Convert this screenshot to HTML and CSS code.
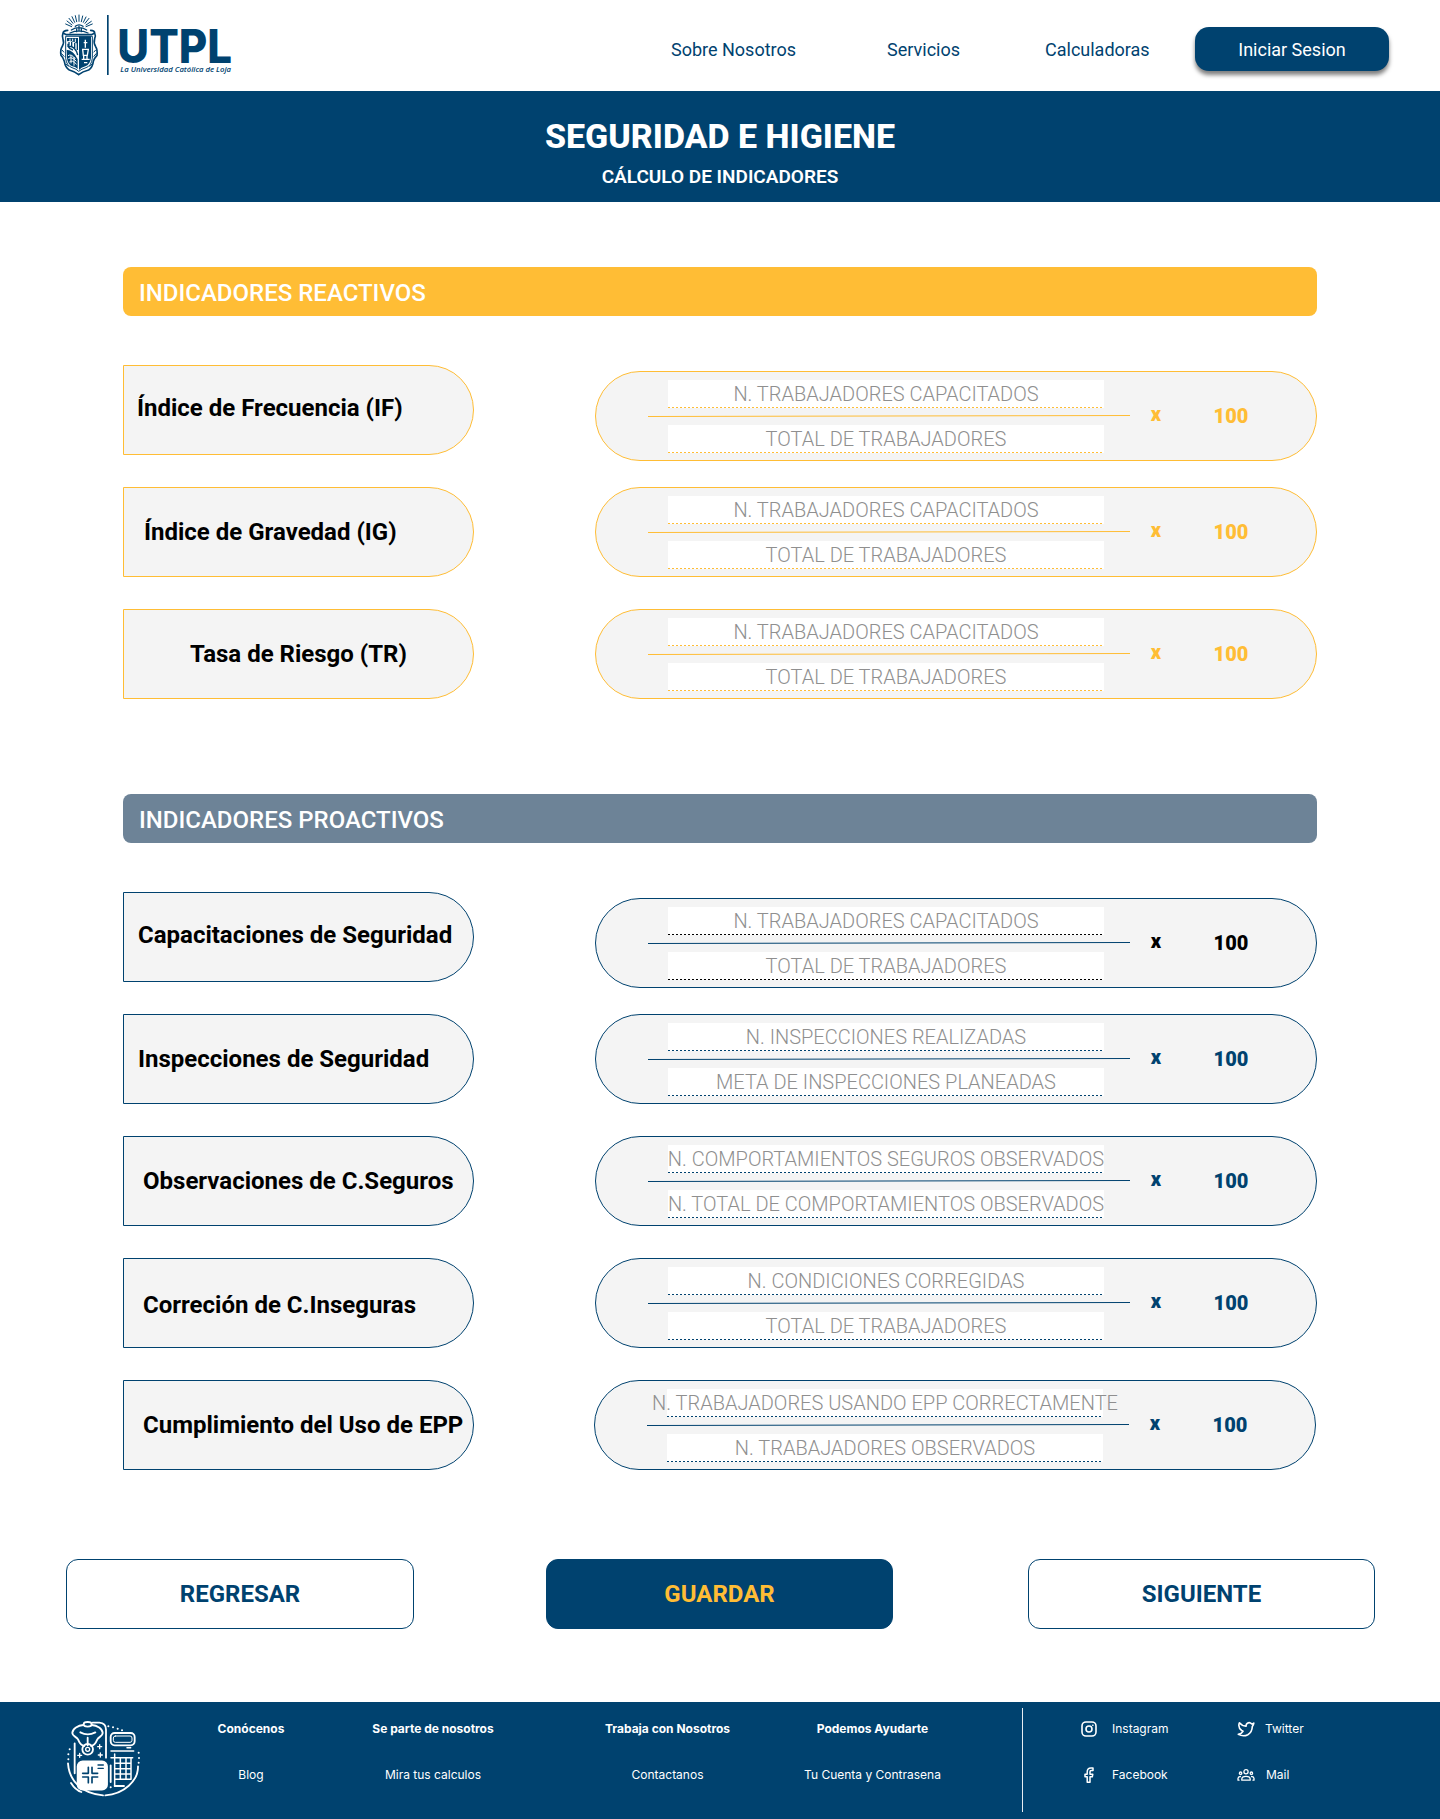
FILE: index.html
```html
<!DOCTYPE html>
<html lang="es">
<head>
<meta charset="utf-8">
<title>Seguridad e Higiene - UTPL</title>
<link rel="stylesheet" href="styles.css">
</head>
<body>
<header class="header">
  <svg class="logo" viewBox="24 30 525 201" role="img" aria-label="UTPL">
    <g fill="none" stroke="#00426f" stroke-linecap="round">
      <path stroke-width="3" d="M65 80 47 72M66 75 51 63M69 70 57 55M74 67 66 50M80 65 76 47M87 64V45M94 65 98 48M100 67 108 51M105 70 117 55M108 75 124 64M108 80 127 72"/>
      <path stroke-width="4" d="M64 90Q87 76 110 90M60 99Q87 86 114 99M76 79Q87 70 99 79M80 87V95M94 87V95M87 79V93"/>
      <path stroke-width="5" d="M53 91Q40 92 39 99L49 104H125L134 99Q134 92 122 91M39 99Q35 110 39 118 43 127 37 139 30 149 33 166 40 172 43 184 46 203 58 210 76 215 86 224 98 214 116 210 128 202 130 184 134 173 141 166 143 149 137 140 130 128 134 116 138 107 134 99"/>
      <path stroke-width="3" d="M47 110V175Q50 198 66 203 80 207 86 214 95 207 108 203 124 198 127 175V110Z"/>
    </g>
    <path fill="#00426f" d="M87 109H123V174Q120 194 106 199 93 203 87 210ZM51 114H84V132Q65 120 51 124ZM50 149Q71 151 83 178V207Q76 200 67 199 53 194 51 174Z"/>
    <g fill="none" stroke="#fff" stroke-width="4">
      <path d="M106 119V143M101 128H112M98 148H115L112 166H100ZM95 178H119M101 166V178M111 166V178M102 188H112"/>
      <path stroke-width="3" d="M54 167Q64 160 76 177M55 176Q65 168 79 184M58 186Q66 178 80 193M63 166V190M72 171V197M60 116V123M68 116V123M76 116V126"/>
    </g>
    <g fill="none" stroke="#00426f" stroke-width="4">
      <path d="M54 131V139Q76 137 83 165M57 126V136M65 126V141M74 129V148M82 127V150M54 139Q58 147 69 150"/>
      <path stroke-width="3" d="M36 150 42 157M34 160 43 170M137 150 131 157M139 160 131 170M48 192 56 199M126 192 118 199"/>
    </g>
    <path fill="#00426f" d="M171 45h5v180h-5z"/>
    <text class="logo-name" x="202" y="188" textLength="344" lengthAdjust="spacingAndGlyphs">UTPL</text>
    <text class="logo-tagline" x="211" y="217" textLength="332" lengthAdjust="spacingAndGlyphs">La Universidad Católica de Loja</text>
  </svg>
  <nav class="nav">
    <a class="nav-about">Sobre Nosotros</a>
    <a class="nav-services">Servicios</a>
    <a class="nav-calc">Calculadoras</a>
  </nav>
  <button class="login">Iniciar Sesion</button>
</header>

<section class="hero">
  <h1>SEGURIDAD E HIGIENE</h1>
  <h2>CÁLCULO DE INDICADORES</h2>
</section>

<main>
  <section class="group reactive">
    <h3>INDICADORES REACTIVOS</h3>
    <div class="rows">
      <div class="row first">
        <div class="label raised flush">Índice de Frecuencia (IF)</div>
        <div class="formula"><div class="fraction"><div class="field">N. TRABAJADORES CAPACITADOS</div><svg class="bar" viewBox="0 0 482 3"><path d="M0 1.5 482 .5"/></svg><div class="field">TOTAL DE TRABAJADORES</div></div><span class="times">x</span><span class="hundred">100</span></div>
      </div>
      <div class="row">
        <div class="label indent wide">Índice de Gravedad (IG)</div>
        <div class="formula"><div class="fraction"><div class="field">N. TRABAJADORES CAPACITADOS</div><svg class="bar" viewBox="0 0 482 3"><path d="M0 1.5 482 .5"/></svg><div class="field">TOTAL DE TRABAJADORES</div></div><span class="times">x</span><span class="hundred">100</span></div>
      </div>
      <div class="row">
        <div class="label centered">Tasa de Riesgo (TR)</div>
        <div class="formula"><div class="fraction"><div class="field">N. TRABAJADORES CAPACITADOS</div><svg class="bar" viewBox="0 0 482 3"><path d="M0 1.5 482 .5"/></svg><div class="field">TOTAL DE TRABAJADORES</div></div><span class="times">x</span><span class="hundred">100</span></div>
      </div>
    </div>
  </section>

  <section class="group proactive">
    <h3>INDICADORES PROACTIVOS</h3>
    <div class="rows">
      <div class="row first">
        <div class="label raised">Capacitaciones de Seguridad</div>
        <div class="formula plain"><div class="fraction"><div class="field">N. TRABAJADORES CAPACITADOS</div><svg class="bar" viewBox="0 0 482 3"><path d="M0 1.5 482 .5"/></svg><div class="field">TOTAL DE TRABAJADORES</div></div><span class="times">x</span><span class="hundred">100</span></div>
      </div>
      <div class="row">
        <div class="label">Inspecciones de Seguridad</div>
        <div class="formula"><div class="fraction"><div class="field">N. INSPECCIONES REALIZADAS</div><svg class="bar" viewBox="0 0 482 3"><path d="M0 1.5 482 .5"/></svg><div class="field">META DE INSPECCIONES PLANEADAS</div></div><span class="times">x</span><span class="hundred">100</span></div>
      </div>
      <div class="row">
        <div class="label indent">Observaciones de C.Seguros</div>
        <div class="formula"><div class="fraction"><div class="field">N. COMPORTAMIENTOS SEGUROS OBSERVADOS</div><svg class="bar" viewBox="0 0 482 3"><path d="M0 1.5 482 .5"/></svg><div class="field">N. TOTAL DE COMPORTAMIENTOS OBSERVADOS</div></div><span class="times">x</span><span class="hundred">100</span></div>
      </div>
      <div class="row">
        <div class="label indent lowered">Correción de C.Inseguras</div>
        <div class="formula"><div class="fraction"><div class="field">N. CONDICIONES CORREGIDAS</div><svg class="bar" viewBox="0 0 482 3"><path d="M0 1.5 482 .5"/></svg><div class="field">TOTAL DE TRABAJADORES</div></div><span class="times">x</span><span class="hundred">100</span></div>
      </div>
      <div class="row last">
        <div class="label indent">Cumplimiento del Uso de EPP</div>
        <div class="formula"><div class="fraction"><div class="field">N. TRABAJADORES USANDO EPP CORRECTAMENTE</div><svg class="bar" viewBox="0 0 482 3"><path d="M0 1.5 482 .5"/></svg><div class="field">N. TRABAJADORES OBSERVADOS</div></div><span class="times">x</span><span class="hundred">100</span></div>
      </div>
    </div>
  </section>

  <div class="actions">
    <button class="action back">REGRESAR</button>
    <button class="action primary">GUARDAR</button>
    <button class="action">SIGUIENTE</button>
  </div>
</main>

<footer class="footer">
  <svg class="footer-logo" viewBox="48 54 222 240" fill="none" stroke="#fff" stroke-width="5.5" stroke-linecap="round" stroke-linejoin="round">
    <ellipse cx="113" cy="73" rx="12" ry="7"/>
    <path d="M100 75C84 76 68 86 67 98 66 109 80 110 84 118 89 130 94 137 103 138M125 75C142 76 157 86 158 98 159 109 146 110 142 118 137 130 132 137 123 138M91 97Q113 109 136 97M113 113V136M128 68H148Q168 69 168 89V173M74 130V220"/>
    <circle cx="113" cy="148" r="16"/><circle cx="113" cy="148" r="6" stroke-width="4"/>
    <path stroke-width="4" d="M149 134V146M143 140H155M151 159V171M145 165H157M89 160V172M83 166H95"/>
    <rect x="83" y="184" width="88" height="85" rx="15" fill="#fff"/>
    <path stroke="#00426f" stroke-width="5" d="M115 202V220H98M126 202V220H143M98 231H115V248M143 231H126V248"/>
    <path stroke="#00426f" stroke-width="4" d="M144 195H160M144 205H160"/>
    <rect x="182" y="99" width="72" height="37" rx="12"/><rect x="190" y="108" width="56" height="19" rx="6" stroke-width="3"/>
    <path d="M183 153H251M231 143H242M183 173H248M194 162V259M194 238H243M243 176V238M211 176V238M228 176V238M194 190H243M194 206H243M194 222H243" stroke-width="4.5"/>
    <path d="M54 190C57 238 91 281 159 286M166 286C222 282 265 242 264 199M63 249Q76 270 94 276M182 196V246M194 258H222"/>
    <g stroke-width="6"><path d="M175 79h.1M189 82h.1M203 86h.1M216 91h.1M59 148h.1M55 163h.1M55 178h.1M266 158h.1M267 174h.1M266 188h.1M182 262h.1"/></g>
  </svg>
  <div class="col col-narrow"><b>Conócenos</b><span>Blog</span></div>
  <div class="col col-narrow"><b>Se parte de nosotros</b><span>Mira tus calculos</span></div>
  <div class="col col-wide"><b>Trabaja con Nosotros</b><span>Contactanos</span></div>
  <div class="col col-help"><b>Podemos Ayudarte</b><span>Tu Cuenta y Contrasena</span></div>
  <div class="divider"></div>
  <div class="social">
    <a><svg viewBox="0 0 18 18"><rect x="2" y="2" width="14" height="14" rx="4"/><circle cx="9" cy="9" r="3"/><path d="M12.8 5.2h.1"/></svg>Instagram</a>
    <a><svg viewBox="0 0 18 18"><path d="M7.2 16.3V10.8H5V8.2H7.2V6Q7.2 2 11 2H13V4.6H11.3Q10 4.6 10 6V8.2H12.8L12.3 10.8H10V16.3Z" stroke-width="1.5"/></svg>Facebook</a>
  </div>
  <div class="social social-right">
    <a><svg viewBox="0 0 18 18"><path d="M16.8 3.1Q15.8 3.8 14.8 4 12.7 1.8 10.4 3.2 8.9 4.1 9.1 6.1 5.2 6.2 2.4 2.8 .6 7.6 4.7 10.5L6 11.3Q4.4 14 1.3 14.4 6.4 17 10.8 14.7 15.1 12.3 15.3 6.5Q16.5 5 16.8 3.1Z"/></svg>Twitter</a>
    <a class="mail"><svg viewBox="0 0 18 18"><g stroke-width="1.3"><circle cx="9" cy="5.8" r="2.1"/><circle cx="3.6" cy="7.2" r="1.2"/><circle cx="14.4" cy="7.2" r="1.2"/><path d="M4.8 14.2V13Q5 10.4 9 10.4T13.2 13V14.2ZM1 14.2V12.4Q1.2 10.6 3.4 10.5M17 14.2V12.4Q16.8 10.6 14.6 10.5M1 14.2H2M16 14.2H17"/></g></svg>Mail</a>
  </div>
</footer>
</body>
</html>
```

FILE: styles.css
```css
:root {
  --navy: #00426f;
  --yellow: #ffbd35;
}

* { box-sizing: border-box; }

body {
  margin: 0;
  width: 1440px;
  background: #fff;
  font-family: Roboto, "Liberation Sans", sans-serif;
  color: #000;
}

h1, h2, h3 { margin: 0; }
button { font-family: inherit; padding: 0; }

/* Header */
.header {
  display: flex;
  align-items: flex-start;
  height: 91px;
  padding-left: 58px;
}
.logo { width: 175px; height: 67px; margin-top: 10px; overflow: visible; }
.logo-name { font: 800 140px Inter, sans-serif; fill: var(--navy); }
.logo-tagline { font: italic 600 23px "Open Sans", sans-serif; fill: var(--navy); }
.nav {
  display: flex;
  gap: 91px;
  margin-left: 438px;
  font-size: 18px;
  line-height: 22px;
  padding-top: 39px;
  color: var(--navy);
}
.nav a { white-space: nowrap; }
.nav-calc { margin-left: -6px; }
.login {
  width: 194px;
  height: 44px;
  margin: 27px 51px 0 auto;
  border: 0;
  border-radius: 14px;
  background: var(--navy);
  color: #fff;
  font-size: 18px;
  box-shadow: 0 4px 4px rgba(0, 0, 0, .5);
}

/* Page title */
.hero {
  height: 111px;
  padding-top: 25px;
  background: var(--navy);
  color: #fff;
  text-align: center;
}
.hero h1 { font-size: 34px; line-height: 40px; font-weight: 800; }
.hero h2 { font-size: 19px; line-height: 22px; font-weight: 600; margin-top: 10px; }

/* Indicator groups */
.group { width: 1194px; margin: 65px auto 0; }
.group.proactive { margin-top: 95px; }
.group h3 {
  height: 49px;
  padding: 0 16px;
  border-radius: 8px;
  background: var(--accent-bar);
  color: #fff;
  font-size: 24px;
  font-weight: 500;
  line-height: 52px;
}
.reactive { --accent: var(--yellow); --accent-bar: var(--yellow); }
.proactive { --accent: var(--navy); --accent-bar: #6d8397; }

.rows { display: flex; flex-direction: column; gap: 32px; margin-top: 49px; }
.row { display: flex; justify-content: space-between; height: 90px; }
.label {
  display: flex;
  align-items: center;
  width: 351px;
  height: 90px;
  padding-left: 14px;
  border: 1px solid var(--accent);
  border-radius: 0 45px 45px 0;
  background: #f4f4f4;
  font-size: 24px;
  font-weight: 700;
  white-space: nowrap;
}
.label.indent { padding-left: 19px; }
.label.flush { padding-left: 13px; }
.label.indent.wide { padding-left: 20px; }
.label.centered { padding-left: 0; justify-content: center; }
.label.raised { padding-bottom: 4px; }
.label.lowered { padding-top: 3px; }

.formula {
  display: flex;
  align-items: flex-start;
  width: 722px;
  height: 90px;
  padding-left: 52px;
  border: 1px solid var(--accent);
  border-radius: 45px;
  background: #f4f4f4;
  color: var(--accent);
  font-size: 20px;
  line-height: 24px;
  font-weight: 900;
}
.first .formula { margin-top: 6px; }
.last .formula { margin-right: 1px; }
.fraction {
  display: flex;
  flex-direction: column;
  width: 482px;
  padding-top: 8px;
}
.field {
  display: flex;
  justify-content: center;
  width: 436px;
  height: 28px;
  margin-left: 20px;
  background: repeating-linear-gradient(90deg, currentColor 0 2px, transparent 2px 4px) left bottom / 100% 1px no-repeat, #fff;
  font-weight: 300;
  line-height: 29px;
  white-space: nowrap;
  -webkit-text-fill-color: #8f8f8f;
}
.plain { color: #000; }
.bar { width: 482px; height: 3px; margin: 7px 0; fill: none; stroke: var(--accent); overflow: visible; }
.times { width: 24px; margin: 30px 0 0 14px; text-align: center; }
.hundred { width: 60px; margin: 32px 0 0 33px; text-align: center; }

/* Form actions */
.actions {
  display: flex;
  justify-content: space-between;
  margin: 89px 65px 73px 66px;
}
.action {
  width: 347px;
  height: 70px;
  border: 1px solid var(--navy);
  border-radius: 12px;
  background: #fff;
  color: var(--navy);
  font-size: 24px;
  font-weight: 700;
}
.action.back { width: 348px; }
.action.primary { margin-right: 3px; background: var(--navy); color: var(--yellow); }

/* Footer */
.footer {
  display: flex;
  align-items: flex-start;
  height: 117px;
  padding-left: 66px;
  background: var(--navy);
  color: #fff;
  font: 12px/16px Inter, sans-serif;
}
.footer-logo { width: 74px; height: 80px; margin: 16px 20px 0 0; }
.col {
  display: flex;
  flex-direction: column;
  align-items: center;
  gap: 30px;
  padding-top: 19px;
}
.col-narrow { width: 182px; }
.col-wide { width: 215px; margin-left: 36px; }
.col-help { width: 195px; }
.divider { width: 1px; height: 104px; margin: 6px 0 0 52px; background: #e8edf2; }
.social {
  display: flex;
  flex-direction: column;
  gap: 28px;
  width: 157px;
  margin: 19px 0 0 57px;
}
.social-right { margin-left: 0; }
.social a { display: flex; align-items: center; gap: 14px; height: 18px; line-height: 16px; padding-bottom: 2px; }
.social-right a { gap: 10px; }
.social a.mail { gap: 11px; }
.social svg {
  width: 18px;
  height: 18px;
  fill: none;
  stroke: #fff;
  stroke-width: 1.6;
  stroke-linecap: round;
  stroke-linejoin: round;
}
```
